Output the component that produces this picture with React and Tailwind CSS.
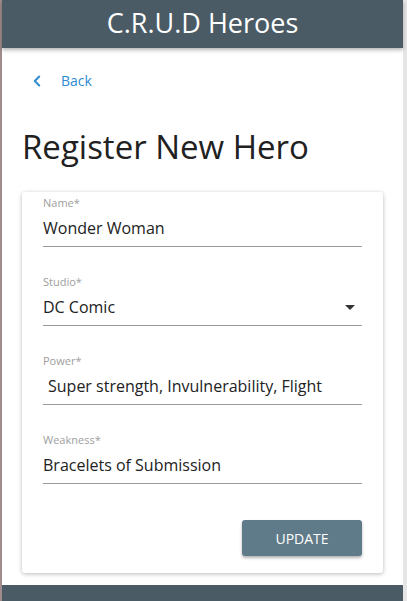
import { ChevronLeft } from 'lucide-react';

const fields = [
  { label: 'Name*', value: 'Wonder Woman' },
  { label: 'Studio*', value: 'DC Comic', select: true },
  { label: 'Power*', value: 'Super strength, Invulnerability, Flight', indent: true },
  { label: 'Weakness*', value: 'Bracelets of Submission' },
];

function Field({ label, value, select, indent }) {
  return (
    <div className="flex flex-col">
      <span className="text-[11px] leading-[14px] text-[#9e9e9e]">{label}</span>
      <div className="flex items-center justify-between h-[37px] border-b border-[#9a9a9a]">
        <span className={`text-[16px] text-[#222] ${indent ? 'pl-[5px]' : ''}`}>{value}</span>
        {select && (
          <svg width="10" height="5" viewBox="0 0 10 5" className="mr-[7px]">
            <path d="M0 0h10L5 5z" fill="#333" />
          </svg>
        )}
      </div>
    </div>
  );
}

export default function App() {
  return (
    <div
      className="w-[407px] h-[601px] flex bg-white overflow-hidden"
      style={{ fontFamily: '"Open Sans", "Noto Sans", sans-serif' }}
    >
      {/* 左端の枠 */}
      <div className="w-[2px] bg-[#a08c8c]" />

      <div className="flex-1 flex flex-col">
        {/* ヘッダー */}
        <header className="h-[48px] bg-[#4a5b66] flex items-center justify-center shadow-[0_2px_4px_rgba(0,0,0,0.3)] z-10">
          <h1 className="text-[27px] text-white leading-none -mt-[3px]">C.R.U.D Heroes</h1>
        </header>

        <main className="flex-1 flex flex-col">
          {/* 戻るリンク */}
          <div className="flex items-center h-[64px] pl-[26px] pt-[1px] text-[#2f8bd0]">
            <ChevronLeft size={18} strokeWidth={2.6} />
            <span className="ml-[15px] text-[14px]">Back</span>
          </div>

          <h2 className="pl-[20px] mt-[13px] text-[33px] leading-[44px] text-[#212121]">Register New Hero</h2>

          {/* フォームカード */}
          <div className="mx-[20px] mt-[23px] h-[381px] bg-white rounded-[3px] shadow-[0_1px_4px_rgba(0,0,0,0.28)] px-[21px] pt-[4px] flex flex-col">
            <div className="flex flex-col gap-[28px]">
              {fields.map((f) => (
                <Field key={f.label} {...f} />
              ))}
            </div>
            <div className="flex justify-end mt-[36px]">
              <button className="w-[120px] h-[36px] rounded-[3px] bg-[#5f7b89] text-white text-[14px] shadow-[0_2px_3px_rgba(0,0,0,0.3)]">
                UPDATE
              </button>
            </div>
          </div>
        </main>

        <footer className="h-[16px] bg-[#4a5b66]" />
      </div>

      {/* スクロールバー領域 */}
      <div className="w-[4px] bg-[#e6e6e6]" />
    </div>
  );
}
